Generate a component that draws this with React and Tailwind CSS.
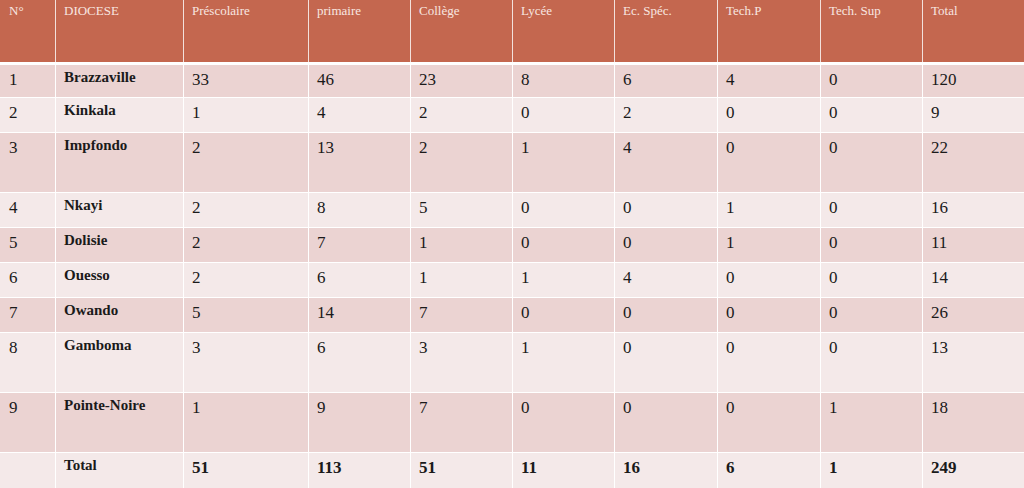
// Diocese school counts table
const headers = ['N°', 'DIOCESE', 'Préscolaire', 'primaire', 'Collège', 'Lycée', 'Ec. Spéc.', 'Tech.P', 'Tech. Sup', 'Total'];

const rows = [
  { n: '1', name: 'Brazzaville', vals: [33, 46, 23, 8, 6, 4, 0, 120], h: 'h-[33px]' },
  { n: '2', name: 'Kinkala', vals: [1, 4, 2, 0, 2, 0, 0, 9], h: 'h-[35px]' },
  { n: '3', name: 'Impfondo', vals: [2, 13, 2, 1, 4, 0, 0, 22], h: 'h-[60px]' },
  { n: '4', name: 'Nkayi', vals: [2, 8, 5, 0, 0, 1, 0, 16], h: 'h-[35px]' },
  { n: '5', name: 'Dolisie', vals: [2, 7, 1, 0, 0, 1, 0, 11], h: 'h-[35px]' },
  { n: '6', name: 'Ouesso', vals: [2, 6, 1, 1, 4, 0, 0, 14], h: 'h-[35px]' },
  { n: '7', name: 'Owando', vals: [5, 14, 7, 0, 0, 0, 0, 26], h: 'h-[35px]' },
  { n: '8', name: 'Gamboma', vals: [3, 6, 3, 1, 0, 0, 0, 13], h: 'h-[60px]' },
  { n: '9', name: 'Pointe-Noire', vals: [1, 9, 7, 0, 0, 0, 1, 18], h: 'h-[60px]' },
];

const totals = [51, 113, 51, 11, 16, 6, 1, 249];

const cols = 'grid grid-cols-[55px_128px_125px_102px_102px_102px_103px_103px_102px_102px]';

export default function App() {
  return (
    <div className="w-[1024px] h-[488px] overflow-hidden bg-white font-['Liberation_Serif',serif] text-[#1a1a1a]">
      {/* Header */}
      <div className={`${cols} h-[65px] bg-[#c4674f] border-b-[3px] border-white`}>
        {headers.map((h, i) => (
          <div
            key={h}
            className={`pt-[3px] text-[13px] leading-4 text-[#f8e6e0] ${i === 0 ? 'pl-[9px]' : 'pl-2 border-l border-white/80'}`}
          >
            {h}
          </div>
        ))}
      </div>

      {/* Body rows */}
      {rows.map((r, ri) => (
        <div
          key={r.n}
          className={`${cols} ${r.h} border-b border-white ${ri % 2 === 0 ? 'bg-[#ebd3d2]' : 'bg-[#f4e9e9]'}`}
        >
          <div className="pl-[9px] pt-[5px] text-[17px] leading-5">{r.n}</div>
          <div className="pl-2 pt-[2px] border-l border-white text-[15px] leading-5 font-bold">{r.name}</div>
          {r.vals.map((v, vi) => (
            <div key={vi} className="pl-2 pt-[5px] border-l border-white text-[17px] leading-5">
              {v}
            </div>
          ))}
        </div>
      ))}

      {/* Total row */}
      <div className={`${cols} h-[35px] bg-[#f4e9e9]`}>
        <div></div>
        <div className="pl-2 pt-[2px] border-l border-white text-[15px] leading-5 font-bold">Total</div>
        {totals.map((v, i) => (
          <div key={i} className="pl-2 pt-[5px] border-l border-white text-[17px] leading-5 font-bold">
            {v}
          </div>
        ))}
      </div>
    </div>
  );
}
